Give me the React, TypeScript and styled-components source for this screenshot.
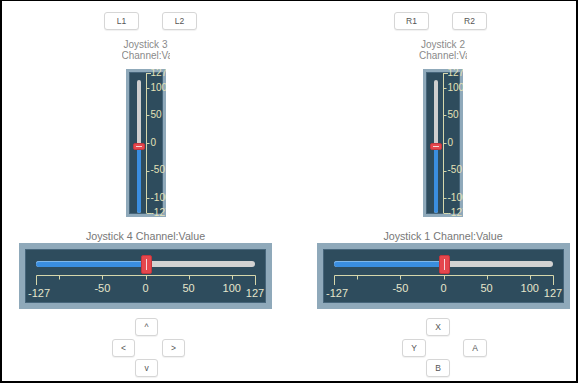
import React from "react";
import styled, { createGlobalStyle } from "styled-components";

const Global = createGlobalStyle`
  html, body { margin: 0; padding: 0; background: #fff; }
  body { font-family: "Liberation Sans", Arial, sans-serif; }
`;

const SCALE_LINE = "#d6d7ac";
const SCALE_TEXT = "#e6e6cc";
const FONT = "Liberation Sans, Arial, sans-serif";

const Frame = styled.div`
  box-sizing: border-box;
  width: 578px;
  height: 383px;
  border: 2px solid #000;
  border-top-width: 1px;
  background: #fff;
  display: flex;
  overflow: hidden;
`;

const Column = styled.div<{ $padLeft: number }>`
  box-sizing: border-box;
  width: 287px;
  padding-left: ${(p) => p.$padLeft}px;
  display: flex;
  flex-direction: column;
  align-items: center;
`;

const ButtonRow = styled.div<{ $shift: number }>`
  display: flex;
  gap: 23px;
  margin-top: 11px;
  margin-left: ${(p) => Math.max(0, p.$shift * 2)}px;
  margin-right: ${(p) => Math.max(0, -p.$shift * 2)}px;
`;

const PadButton = styled.button<{ $w: number; $area?: string }>`
  box-sizing: border-box;
  width: ${(p) => p.$w}px;
  height: 18px;
  padding: 0;
  border: 1px solid #d6d6d6;
  border-radius: 3px;
  background: #fff;
  box-shadow: 0 1px 1px rgba(0, 0, 0, 0.06);
  font-family: "Liberation Sans", Arial, sans-serif;
  font-size: 8.5px;
  color: #555;
  grid-area: ${(p) => p.$area || "auto"};
  justify-self: start;
`;

const StackLabel = styled.div`
  width: 48px;
  margin-top: 9px;
  font-size: 10px;
  line-height: 11px;
  color: #8a8a8a;
  text-align: center;
  white-space: nowrap;
  overflow: hidden;
`;

const LabelLine = styled.div``;

const VPanel = styled.div`
  box-sizing: border-box;
  position: relative;
  width: 40px;
  height: 148px;
  margin-top: 8px;
  padding: 3px;
  background: #8fa9ba;
  overflow: hidden;
`;

const VInner = styled.div`
  box-sizing: border-box;
  height: 100%;
  padding: 8px 0 0 8px;
  background: #2e4c5d;
  box-shadow: inset 0 0 0 1px #46657a;
`;

const VTrack = styled.div`
  position: relative;
  width: 4px;
  height: 133px;
  border-radius: 2px;
  background: #cfcfcf;
`;

const VFill = styled.div`
  position: absolute;
  left: 0;
  right: 0;
  bottom: 0;
  border-radius: 0 0 2px 2px;
  background: #3a8ee0;
`;

const VThumb = styled.div`
  position: absolute;
  left: -4px;
  width: 12px;
  height: 7px;
  box-sizing: border-box;
  border: 1px solid #c2363d;
  border-radius: 2px;
  background: #e5474d;
  &::after {
    content: "";
    position: absolute;
    left: 2px;
    right: 2px;
    top: 2px;
    height: 1px;
    background: #f6d9da;
  }
`;

const ScaleOverlay = styled.svg`
  position: absolute;
  left: 0;
  top: 0;
`;

const HLabel = styled.div`
  margin-top: 13px;
  font-size: 10.7px;
  line-height: 12px;
  color: #777;
  white-space: nowrap;
`;

const HPanel = styled.div`
  box-sizing: border-box;
  width: 253px;
  height: 66px;
  margin-top: 1px;
  padding: 6px;
  background: #8fa9ba;
`;

const HInner = styled.div`
  box-sizing: border-box;
  height: 100%;
  padding: 12px 11px 0;
  background: #2e4c5d;
  box-shadow: inset 0 0 0 1px #46657a;
`;

const HTrack = styled.div`
  position: relative;
  height: 6px;
  border-radius: 3px;
  background: #d2d2d2;
`;

const HFill = styled.div`
  position: absolute;
  left: 0;
  top: 0;
  bottom: 0;
  border-radius: 3px 0 0 3px;
  background: #3a8ee0;
  box-shadow: inset 0 1px 0 #7fb7ea;
`;

const HThumb = styled.div`
  position: absolute;
  top: -6px;
  width: 11px;
  height: 19px;
  box-sizing: border-box;
  border: 1px solid #c2363d;
  border-radius: 2px;
  background: #e5474d;
  &::after {
    content: "";
    position: absolute;
    top: 3px;
    bottom: 3px;
    left: 4px;
    width: 1px;
    background: #f6d9da;
  }
`;

const HScale = styled.svg`
  display: block;
  margin: 0 -11px;
`;

const DPad = styled.div<{ $cols: string; $shift: number }>`
  display: grid;
  grid-template-columns: ${(p) => p.$cols};
  grid-template-rows: 18px 18px 18px;
  row-gap: 2.5px;
  grid-template-areas:
    ". up ."
    "left . right"
    ". down .";
  margin-top: 9px;
  margin-left: ${(p) => Math.max(0, p.$shift * 2)}px;
  margin-right: ${(p) => Math.max(0, -p.$shift * 2)}px;
`;

const VSlider: React.FC<{ value: number }> = ({ value }) => {
  const pct = (value + 127) / 254;
  const trackH = 133;
  const thumbTop = trackH * (1 - pct) - 3.5;
  const ticks = [127, 100, 50, 0, -50, -100, -127];
  const yOf = (v: number) => 4 + ((127 - v) / 254) * 140;
  return (
    <VPanel>
      <VInner>
        <VTrack>
          <VFill style={{ height: `${pct * 100}%` }} />
          <VThumb style={{ top: thumbTop }} />
        </VTrack>
      </VInner>
      <ScaleOverlay width={40} height={148}>
        <line x1={20.5} y1={yOf(127)} x2={20.5} y2={yOf(-127)} stroke={SCALE_LINE} strokeWidth={1} />
        {ticks.map((t) => {
          const end = t === 127 || t === -127;
          return (
            <g key={t}>
              <line
                x1={20.5}
                x2={end ? 25 : 23.5}
                y1={Math.round(yOf(t)) + 0.5}
                y2={Math.round(yOf(t)) + 0.5}
                stroke={SCALE_LINE}
                strokeWidth={1}
              />
              <text
                x={24.5}
                y={yOf(t)}
                dominantBaseline="middle"
                fontFamily={FONT}
                fontSize={10}
                fill="#e4e2b8"
              >
                {t}
              </text>
            </g>
          );
        })}
      </ScaleOverlay>
    </VPanel>
  );
};

const HSlider: React.FC<{ value: number }> = ({ value }) => {
  const pct = (value + 127) / 254;
  const trackW = 219;
  const xOf = (v: number) => 11 + ((v + 127) / 254) * trackW;
  const mids = [-100, -50, 0, 50, 100];
  return (
    <HPanel>
      <HInner>
        <HTrack>
          <HFill style={{ width: `${pct * 100}%` }} />
          <HThumb style={{ left: trackW * pct - 4.5 }} />
        </HTrack>
        <HScale width={241} height={36}>
          <polyline
            points={`${xOf(-127) + 0.5},18 ${xOf(-127) + 0.5},8.5 ${xOf(127) + 0.5},8.5 ${xOf(127) + 0.5},18`}
            fill="none"
            stroke={SCALE_LINE}
            strokeWidth={1}
          />
          {mids.map((t) => (
            <line
              key={t}
              x1={Math.round(xOf(t)) + 0.5}
              x2={Math.round(xOf(t)) + 0.5}
              y1={8.5}
              y2={12.5}
              stroke={SCALE_LINE}
              strokeWidth={1}
            />
          ))}
          {[-50, 0, 50, 100].map((t) => (
            <text
              key={t}
              x={xOf(t)}
              y={22}
              textAnchor="middle"
              dominantBaseline="middle"
              fontFamily={FONT}
              fontSize={11}
              fill={SCALE_TEXT}
            >
              {t}
            </text>
          ))}
          <text x={xOf(-127) + 3} y={27} textAnchor="middle" dominantBaseline="middle" fontFamily={FONT} fontSize={11} fill={SCALE_TEXT}>
            -127
          </text>
          <text x={xOf(127)} y={27} textAnchor="middle" dominantBaseline="middle" fontFamily={FONT} fontSize={11} fill={SCALE_TEXT}>
            127
          </text>
        </HScale>
      </HInner>
    </HPanel>
  );
};

type Side = {
  padLeft: number;
  buttons: [string, string];
  btnShift: number;
  vName: string;
  hName: string;
  pad: { up: string; left: string; right: string; down: string };
  padCols: string;
  padW: number;
  padShift: number;
};

const sides: Side[] = [
  {
    padLeft: 0,
    buttons: ["L1", "L2"],
    btnShift: 5,
    vName: "Joystick 3",
    hName: "Joystick 4 Channel:Value",
    pad: { up: "^", left: "<", right: ">", down: "v" },
    padCols: "23px 27px 23px",
    padW: 23,
    padShift: 3,
  },
  {
    padLeft: 21,
    buttons: ["R1", "R2"],
    btnShift: -2.5,
    vName: "Joystick 2",
    hName: "Joystick 1 Channel:Value",
    pad: { up: "X", left: "Y", right: "A", down: "B" },
    padCols: "24px 37px 24px",
    padW: 24,
    padShift: 1.5,
  },
];

export default function App() {
  return (
    <>
      <Global />
      <Frame>
        {sides.map((s) => (
          <Column key={s.vName} $padLeft={s.padLeft}>
            <ButtonRow $shift={s.btnShift}>
              <PadButton $w={35}>{s.buttons[0]}</PadButton>
              <PadButton $w={35}>{s.buttons[1]}</PadButton>
            </ButtonRow>
            <StackLabel>
              <LabelLine>{s.vName}</LabelLine>
              <LabelLine>Channel:Value</LabelLine>
            </StackLabel>
            <VSlider value={0} />
            <HLabel>{s.hName}</HLabel>
            <HSlider value={0} />
            <DPad $cols={s.padCols} $shift={s.padShift}>
              <PadButton $w={s.padW} $area="up">{s.pad.up}</PadButton>
              <PadButton $w={s.padW} $area="left">{s.pad.left}</PadButton>
              <PadButton $w={s.padW} $area="right">{s.pad.right}</PadButton>
              <PadButton $w={s.padW} $area="down">{s.pad.down}</PadButton>
            </DPad>
          </Column>
        ))}
      </Frame>
    </>
  );
}
